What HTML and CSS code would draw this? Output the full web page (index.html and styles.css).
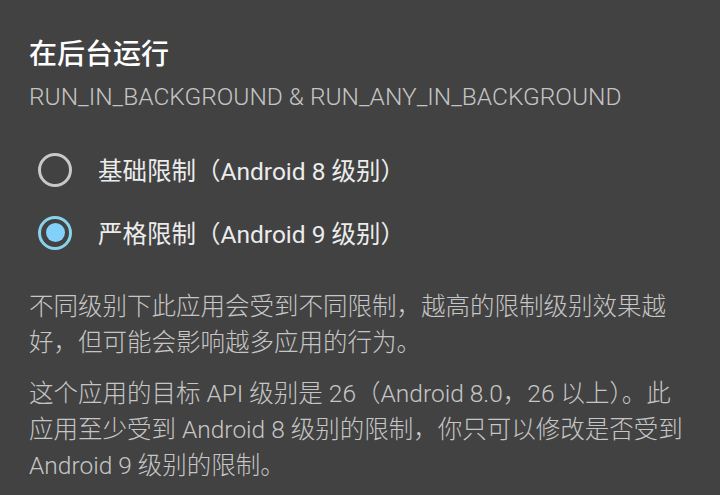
FILE: index.html
```html
<!DOCTYPE html>
<html lang="zh-CN">
<head>
  <meta charset="UTF-8" />
  <meta name="viewport" content="width=device-width, initial-scale=1.0"/>
  <title>在后台运行</title>
  <link rel="stylesheet" href="styles.css">
</head>
<body>
  <div class="page">
    <h1 class="title">在后台运行</h1>
    <div class="subtitle">RUN_IN_BACKGROUND &amp; RUN_ANY_IN_BACKGROUND</div>

    <div class="options">
      <label class="option">
        <span class="radio"></span>
        <span class="option-text">基础限制（Android 8 级别）</span>
      </label>
      <label class="option">
        <span class="radio checked"></span>
        <span class="option-text">严格限制（Android 9 级别）</span>
      </label>
    </div>

    <p class="desc">不同级别下此应用会受到不同限制，越高的限制级别效果越好，但可能会影响越多应用的行为。</p>
    <p class="desc">这个应用的目标 API 级别是 26（Android 8.0，26 以上）。此应用至少受到 Android 8 级别的限制，你只可以修改是否受到 Android 9 级别的限制。</p>
  </div>
</body>
</html>
```

FILE: styles.css
```css
body {
  margin: 0;
  background: #424242;
  font-family: Roboto, "Noto Sans CJK SC", sans-serif;
}
.page {
  padding: 37px 33px 0 29px;
}
.title {
  margin: 0;
  font-size: 28px;
  line-height: 36px;
  font-weight: 500;
  color: #fff;
}
.subtitle {
  margin-top: 7px;
  font-size: 24.5px;
  line-height: 34px;
  font-weight: 300;
  color: #c4c4c4;
}
.options {
  margin-top: 24px;
}
.option {
  display: flex;
  align-items: center;
  height: 63px;
}
.radio {
  box-sizing: border-box;
  width: 34px;
  height: 34px;
  margin-left: 9px;
  margin-right: 26px;
  border: 3px solid #c8c8c8;
  border-radius: 50%;
  display: flex;
  align-items: center;
  justify-content: center;
}
.radio.checked {
  border-color: #8ad2ec;
}
.radio.checked::after {
  content: "";
  width: 19px;
  height: 19px;
  border-radius: 50%;
  background: #83d0fb;
}
.option-text {
  font-size: 24.5px;
  color: #ececec;
}
.desc {
  margin: 25px 0 0;
  font-size: 24.5px;
  line-height: 36px;
  font-weight: 300;
  color: #c6c6c6;
}
.desc + .desc {
  margin-top: 15px;
}
```
